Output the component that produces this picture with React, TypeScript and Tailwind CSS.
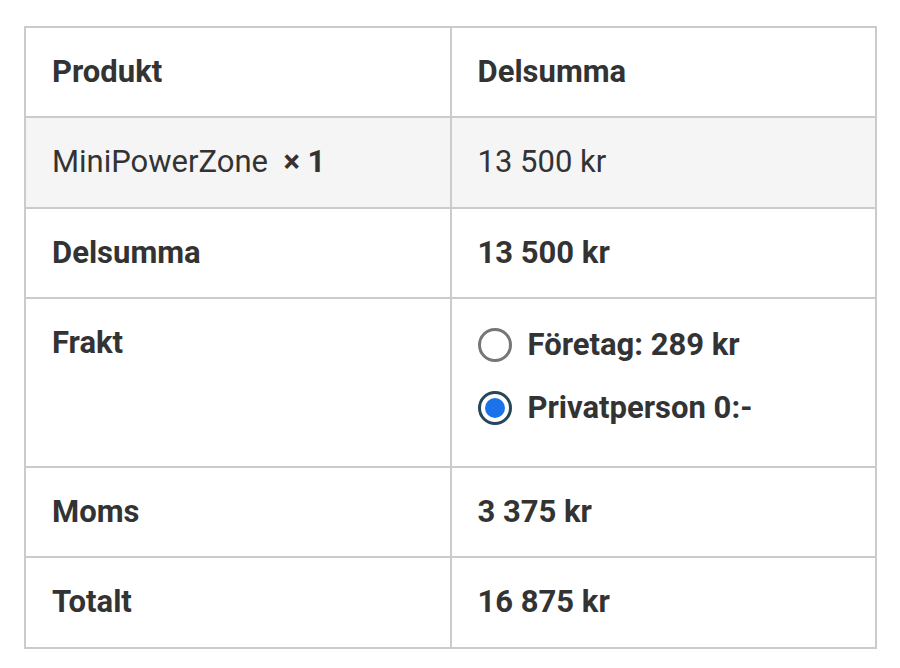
import React from 'react'

const Radio = ({ checked }: { checked?: boolean }) => {
  if (checked) {
    return (
      <span className="flex h-[34px] w-[34px] shrink-0 items-center justify-center rounded-full border-[3px] border-[#26465a] bg-white">
        <span className="h-[20px] w-[20px] rounded-full bg-[#1a73e8]" />
      </span>
    )
  }
  return (
    <span className="block h-[34px] w-[34px] shrink-0 rounded-full border-[3px] border-[#767676] bg-white" />
  )
}

const cell = 'border-2 border-[#cbcbcb] px-[26px] py-[24px] align-top leading-[39px]'

export default function App() {
  return (
    <div
      className="min-h-[668px] bg-white pl-[24px] pr-[23px] pt-[26px] text-[31px] text-[#333333]"
      style={{ fontFamily: 'Roboto, "Liberation Sans", sans-serif' }}
    >
      <table className="w-full table-fixed border-collapse">
        <tbody>
          <tr>
            <th className={`${cell} h-[90px] text-left font-bold`}>Produkt</th>
            <th className={`${cell} text-left font-bold`}>Delsumma</th>
          </tr>
          <tr className="bg-[#f5f5f5]">
            <td className={`${cell} h-[91px]`}>
              MiniPowerZone&nbsp; <strong className="font-bold">× 1</strong>
            </td>
            <td className={cell}>13 500 kr</td>
          </tr>
          <tr>
            <th className={`${cell} h-[90px] text-left font-bold`}>Delsumma</th>
            <td className={`${cell} font-bold`}>13 500 kr</td>
          </tr>
          <tr>
            <th className={`${cell} h-[169px] text-left font-bold`}>Frakt</th>
            <td className={`${cell} pt-[26px]`}>
              <div className="flex flex-col gap-[24px] font-bold">
                <label className="flex items-center gap-[16px]">
                  <Radio />
                  <span>Företag: 289 kr</span>
                </label>
                <label className="flex items-center gap-[16px]">
                  <Radio checked />
                  <span>Privatperson 0:-</span>
                </label>
              </div>
            </td>
          </tr>
          <tr>
            <th className={`${cell} h-[90px] text-left font-bold`}>Moms</th>
            <td className={`${cell} font-bold`}>3 375 kr</td>
          </tr>
          <tr>
            <th className={`${cell} h-[91px] text-left font-bold`}>Totalt</th>
            <td className={`${cell} font-bold`}>16 875 kr</td>
          </tr>
        </tbody>
      </table>
    </div>
  )
}
